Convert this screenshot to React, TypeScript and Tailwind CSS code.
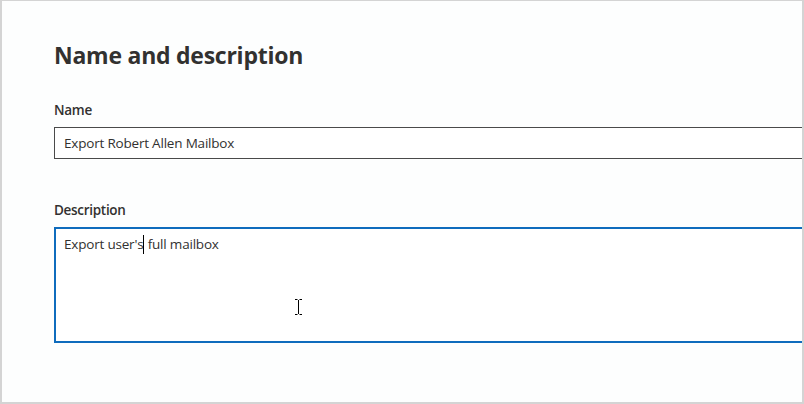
import React from "react";

const font = { fontFamily: '"Open Sans", "Noto Sans", sans-serif' };

function IBeam() {
  return (
    <svg
      className="absolute left-[238px] top-[69px]"
      width="9"
      height="18"
      viewBox="0 0 9 18"
      fill="none"
      stroke="#000"
      strokeWidth="1"
    >
      <path d="M1 1.5h2.5M5.5 1.5H8M4.5 2v14M1 16.5h2.5M5.5 16.5H8" />
    </svg>
  );
}

export default function App() {
  return (
    <div
      className="w-[804px] h-[404px] overflow-hidden bg-[#fdfefe] border-l-2 border-r-2 border-b-2 border-t border-[#d4d4d4] text-[#323130]"
      style={font}
    >
      <div className="pl-[52px] pt-[40px]">
        <h1 className="text-[23px] leading-[28px] font-bold tracking-[-0.25px]">Name and description</h1>

        <label className="block mt-[31px] text-[13.5px] leading-[20px] font-semibold tracking-[-0.3px]">Name</label>
        <div className="mt-[7px] w-[800px] h-[32px] border border-[#4a4a4a] flex items-center pl-[9px] text-[13.5px] tracking-[-0.2px] bg-white">
          Export Robert Allen Mailbox
        </div>

        <label className="block mt-[41px] text-[13.5px] leading-[20px] font-semibold tracking-[-0.3px]">Description</label>
        <div className="relative mt-[7px] w-[800px] h-[116px] border-2 border-[#0f6cbd] pl-[8px] pt-[5px] text-[13.5px] leading-[20px] tracking-[-0.2px] bg-white">
          Export user's
          <span className="inline-block w-px h-[19px] bg-black align-[-5px]" />
          {" full mailbox"}
          <IBeam />
        </div>
      </div>
    </div>
  );
}
